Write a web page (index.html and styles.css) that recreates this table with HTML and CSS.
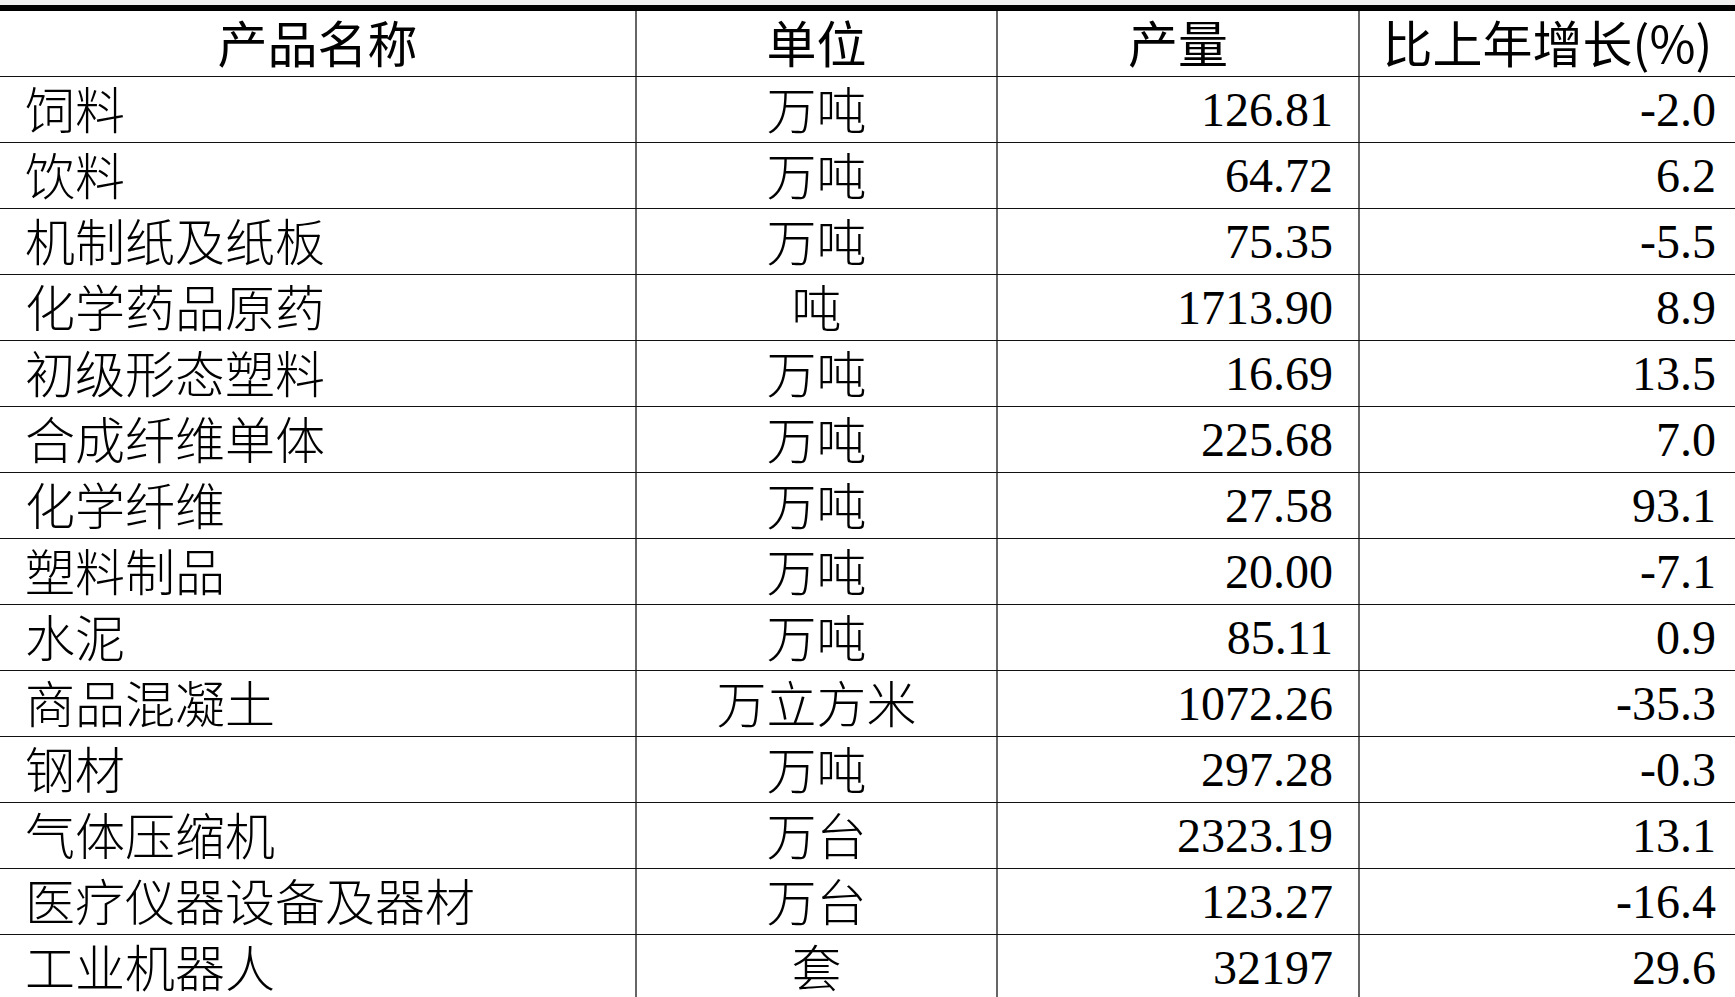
FILE: index.html
```html
<!DOCTYPE html>
<html lang="zh-CN">
<head>
<meta charset="utf-8">
<title>主要工业产品产量</title>
<link rel="stylesheet" href="styles.css">
</head>
<body>
<div class="strip"></div>
<div class="table">
  <div class="row head">
    <div class="cell c1">产品名称</div>
    <div class="cell c2">单位</div>
    <div class="cell c3">产量</div>
    <div class="cell c4">比上年增长(%)</div>
  </div>
  <div class="row"><div class="cell c1">饲料</div><div class="cell c2">万吨</div><div class="cell c3">126.81</div><div class="cell c4">-2.0</div></div>
  <div class="row"><div class="cell c1">饮料</div><div class="cell c2">万吨</div><div class="cell c3">64.72</div><div class="cell c4">6.2</div></div>
  <div class="row"><div class="cell c1">机制纸及纸板</div><div class="cell c2">万吨</div><div class="cell c3">75.35</div><div class="cell c4">-5.5</div></div>
  <div class="row"><div class="cell c1">化学药品原药</div><div class="cell c2">吨</div><div class="cell c3">1713.90</div><div class="cell c4">8.9</div></div>
  <div class="row"><div class="cell c1">初级形态塑料</div><div class="cell c2">万吨</div><div class="cell c3">16.69</div><div class="cell c4">13.5</div></div>
  <div class="row"><div class="cell c1">合成纤维单体</div><div class="cell c2">万吨</div><div class="cell c3">225.68</div><div class="cell c4">7.0</div></div>
  <div class="row"><div class="cell c1">化学纤维</div><div class="cell c2">万吨</div><div class="cell c3">27.58</div><div class="cell c4">93.1</div></div>
  <div class="row"><div class="cell c1">塑料制品</div><div class="cell c2">万吨</div><div class="cell c3">20.00</div><div class="cell c4">-7.1</div></div>
  <div class="row"><div class="cell c1">水泥</div><div class="cell c2">万吨</div><div class="cell c3">85.11</div><div class="cell c4">0.9</div></div>
  <div class="row"><div class="cell c1">商品混凝土</div><div class="cell c2">万立方米</div><div class="cell c3">1072.26</div><div class="cell c4">-35.3</div></div>
  <div class="row"><div class="cell c1">钢材</div><div class="cell c2">万吨</div><div class="cell c3">297.28</div><div class="cell c4">-0.3</div></div>
  <div class="row"><div class="cell c1">气体压缩机</div><div class="cell c2">万台</div><div class="cell c3">2323.19</div><div class="cell c4">13.1</div></div>
  <div class="row"><div class="cell c1">医疗仪器设备及器材</div><div class="cell c2">万台</div><div class="cell c3">123.27</div><div class="cell c4">-16.4</div></div>
  <div class="row"><div class="cell c1">工业机器人</div><div class="cell c2">套</div><div class="cell c3">32197</div><div class="cell c4">29.6</div></div>
</div>
</body>
</html>
```
FILE: styles.css
```css
html, body {
  margin: 0;
  padding: 0;
  background: #ffffff;
  overflow: hidden;
}
body {
  color: #000;
  font-family: "Noto Sans CJK SC", sans-serif;
}
.strip {
  height: 5px;
  background: #f0f0f0;
}
.table {
  border-top: 6px solid #000;
}
.row {
  display: grid;
  grid-template-columns: 637px 361px 362px 1fr;
  height: 66px;
  box-sizing: border-box;
  border-bottom: 1px solid #111;
}
.cell {
  display: flex;
  align-items: center;
  box-sizing: border-box;
  border-right: 2px solid #666;
  line-height: 1;
  white-space: nowrap;
}
.cell.c4 {
  border-right: none;
}
.c1, .c2 {
  font-family: "Noto Sans CJK SC", sans-serif;
  font-weight: 300;
  font-size: 50px;
  padding-bottom: 5px;
}
.c1 {
  justify-content: flex-start;
  padding-left: 25px;
}
.c2 {
  justify-content: center;
}
.c3, .c4 {
  font-family: "Liberation Serif", "Noto Sans CJK SC", serif;
  font-size: 48px;
  justify-content: flex-end;
}
.c3 {
  padding-right: 25px;
}
.c4 {
  padding-right: 19px;
}
.head .cell {
  font-family: "Noto Sans CJK SC", sans-serif;
  font-weight: 400;
  font-size: 50px;
  justify-content: center;
  padding: 0 0 5px 0;
}
```
